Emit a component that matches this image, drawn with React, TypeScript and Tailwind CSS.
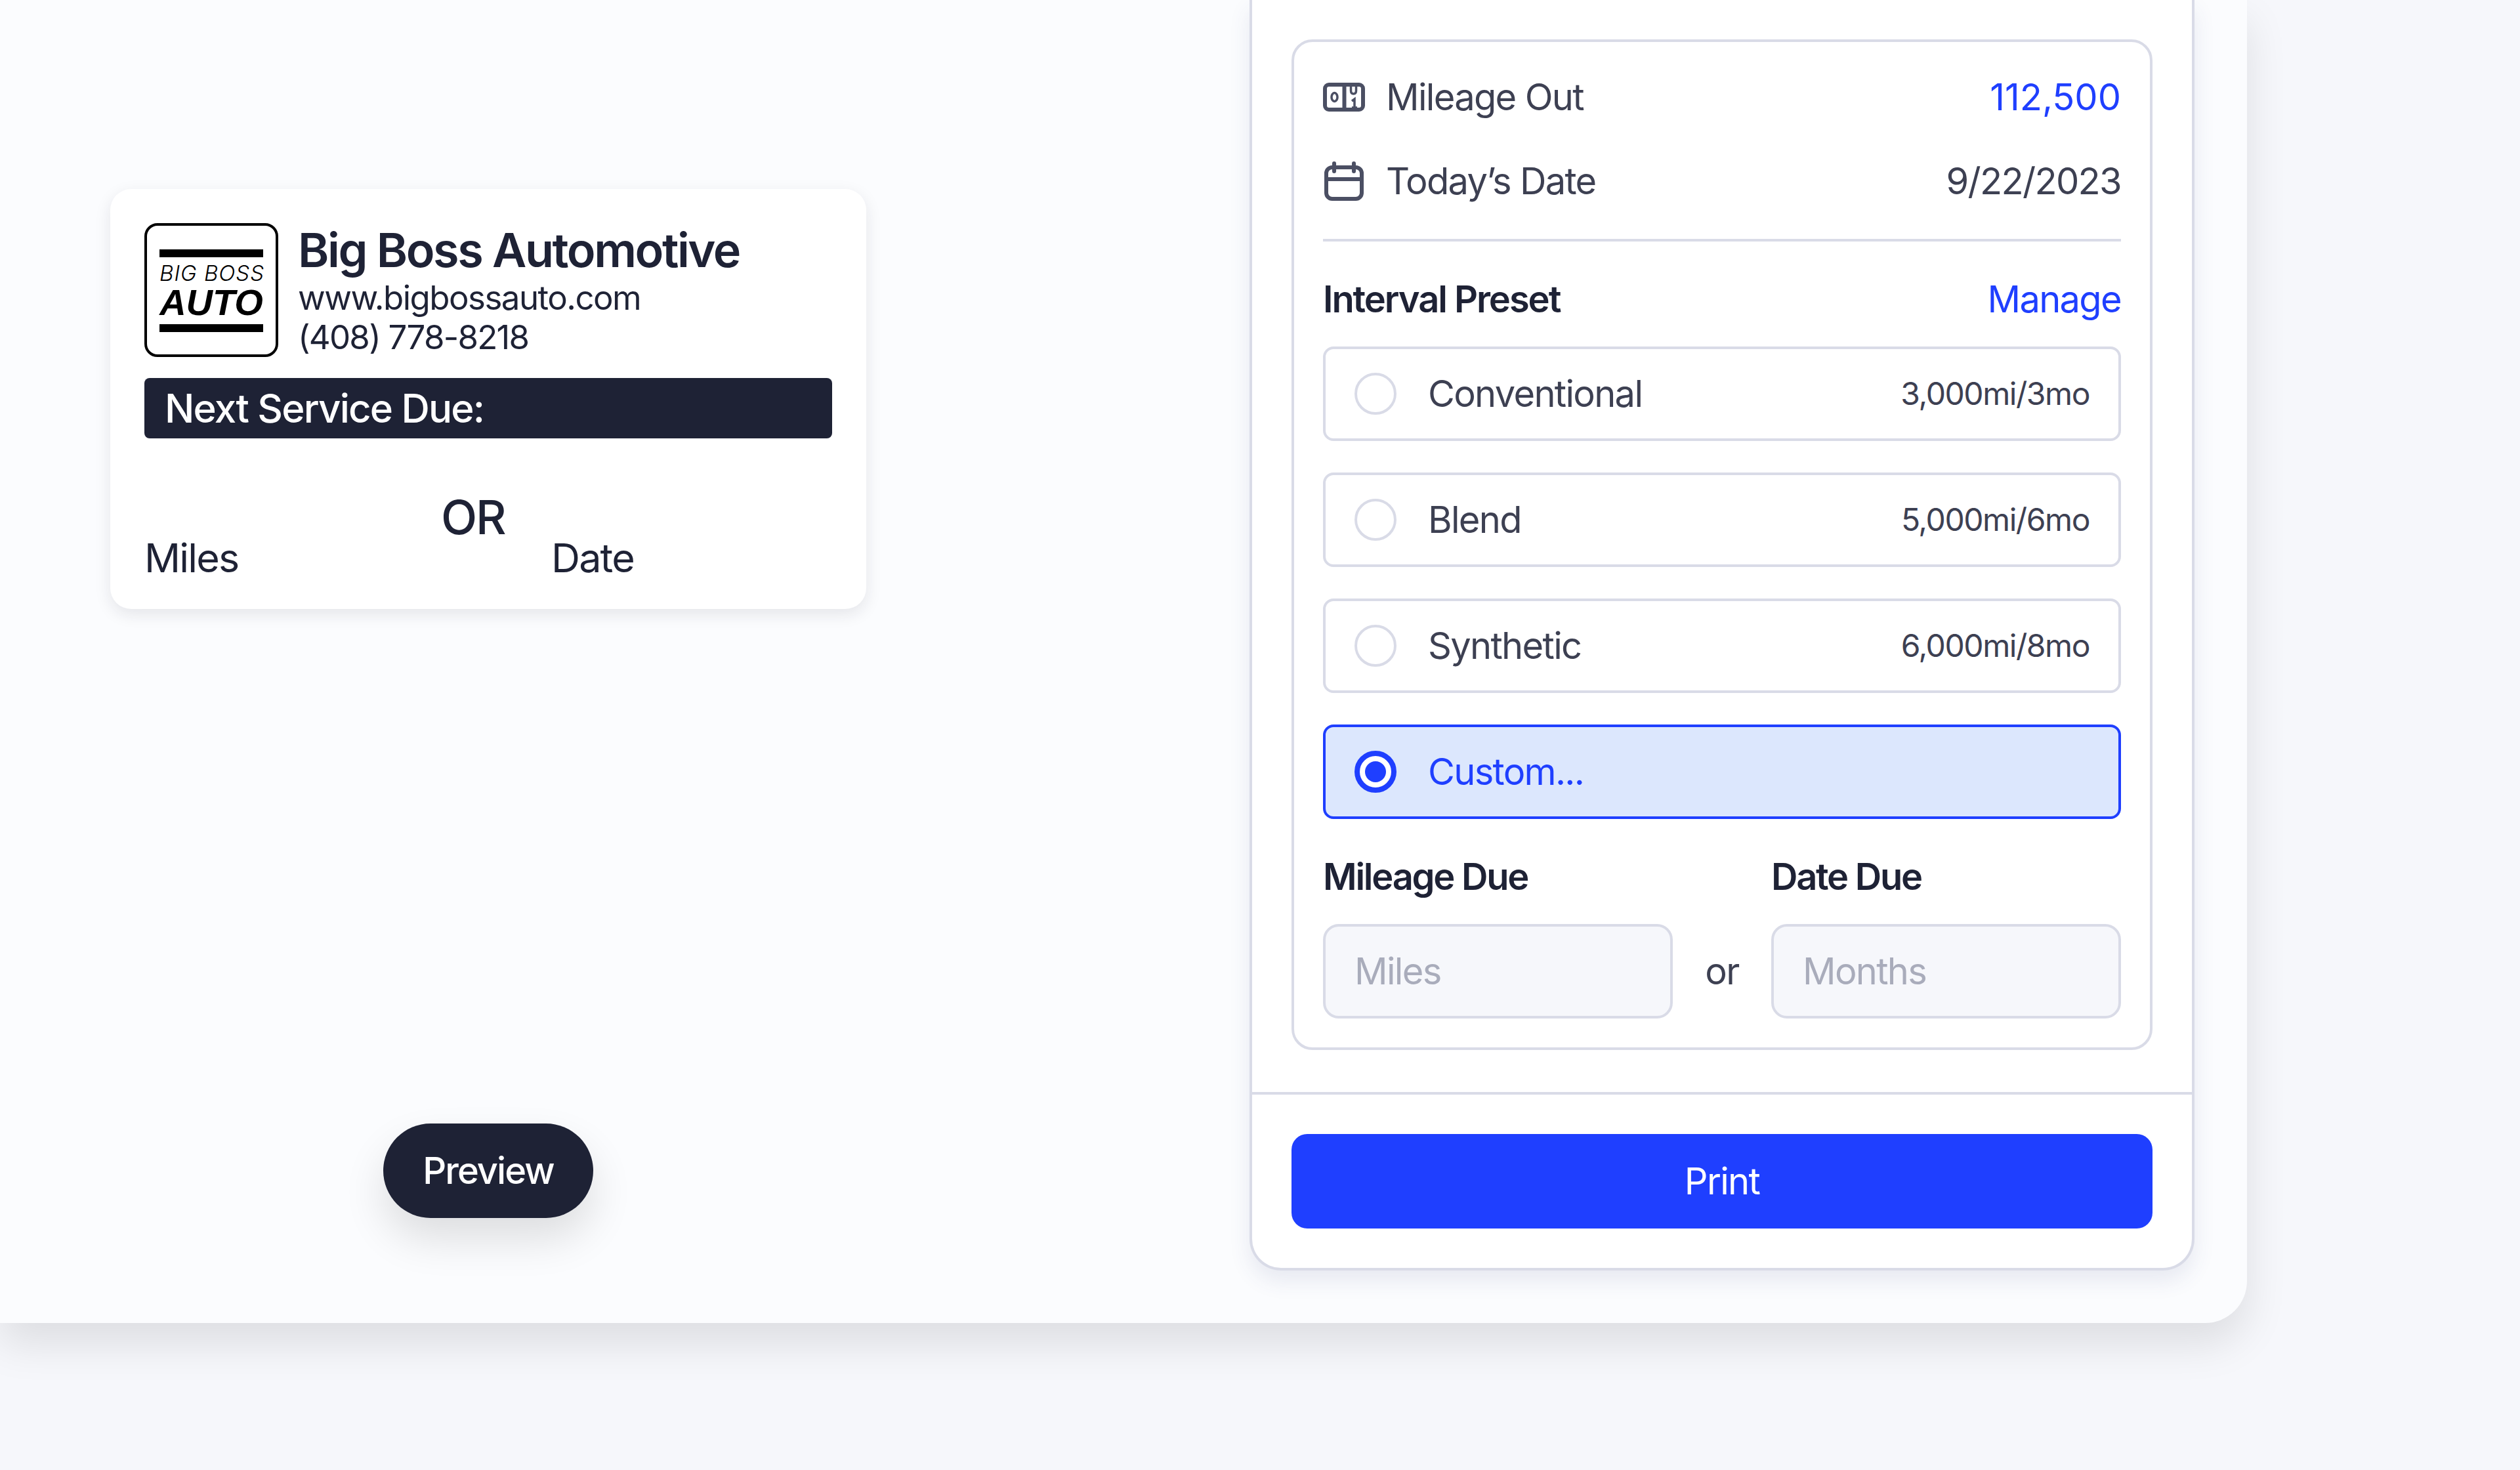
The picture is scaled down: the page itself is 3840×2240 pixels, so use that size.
import { type ReactNode } from "react";

const presets = [
  { name: "Conventional", interval: "3,000mi/3mo" },
  { name: "Blend", interval: "5,000mi/6mo" },
  { name: "Synthetic", interval: "6,000mi/8mo" },
];

function OdometerIcon() {
  return (
    <svg width="64" height="44" viewBox="0 0 64 44" fill="none" className="shrink-0">
      <rect x="3" y="3" width="58" height="38" rx="6" stroke="#4b4f63" strokeWidth="6" />
      <path d="M32.5 3V41" stroke="#4b4f63" strokeWidth="6" />
      {/* counter digits */}
      <ellipse cx="17.5" cy="22" rx="4.5" ry="6.5" stroke="#4b4f63" strokeWidth="3.5" />
      <path d="M42.5 5V12Q42.5 17 46.5 17Q50.5 17 50.5 12V5" stroke="#4b4f63" strokeWidth="3.5" />
      <path d="M44 28L48 25V39M44 38H52" stroke="#4b4f63" strokeWidth="3.5" />
    </svg>
  );
}

function CalendarIcon() {
  return (
    <svg width="64" height="60" viewBox="0 0 64 60" fill="none" className="shrink-0">
      <rect x="5" y="9" width="54" height="48" rx="9" stroke="#4b4f63" strokeWidth="6" />
      <path d="M5 27H59" stroke="#4b4f63" strokeWidth="6" />
      <path d="M17 3V15M47 3V15" stroke="#4b4f63" strokeWidth="6" strokeLinecap="round" />
    </svg>
  );
}

function Logo() {
  return (
    <div className="flex h-[204px] w-[204px] shrink-0 flex-col rounded-[20px] border-4 border-black bg-white px-[19px] pt-[36px] font-['Liberation_Sans',sans-serif] tracking-normal text-black italic">
      <div className="h-[12px] bg-black" />
      <div className="mt-[6px] h-[36px] text-center font-[Inter,sans-serif] text-[33px] leading-[36px] font-light tracking-[1px] whitespace-nowrap">
        BIG BOSS
      </div>
      <div className="mt-[2px] h-[50px] text-center text-[56px] leading-[50px] font-bold whitespace-nowrap">
        AUTO
      </div>
      <div className="mt-[8px] h-[12px] bg-black" />
    </div>
  );
}

function Row({ icon, label, children }: { icon: ReactNode; label: string; children: ReactNode }) {
  return (
    <div className="flex h-[80px] items-center justify-between">
      <div className="flex items-center gap-[32px] text-[#3d4052]">
        {icon}
        <span>{label}</span>
      </div>
      {children}
    </div>
  );
}

export default function App() {
  return (
    <div className="h-[2240px] w-full overflow-hidden bg-[#f6f7fb] font-[Inter,sans-serif] text-[56px] leading-[80px] tracking-[-0.03em] text-[#1e2235]">
      <div className="flex h-[2016px] w-[3424px] justify-between rounded-br-[64px] bg-[#fbfcfe] pr-[80px] pl-[168px] shadow-[0_32px_64px_rgba(0,0,0,0.1)]">
        {/* label preview */}
        <div className="flex w-[1152px] flex-col items-center pt-[288px]">
          <div className="h-[640px] w-full rounded-[32px] bg-white p-[52px] shadow-[0_8px_24px_rgba(30,34,53,0.1)]">
            <div className="flex gap-[30px]">
              <Logo />
              <div className="pt-[2px]">
                <div className="text-[72px] leading-[78px] font-semibold tracking-[-0.034em]">Big Boss Automotive</div>
                <div className="mt-[4px] text-[51px] leading-[60px] tracking-[-0.03em]">www.bigbossauto.com</div>
                <div className="text-[51px] leading-[60px] tracking-[-0.035em]">(408) 778-8218</div>
              </div>
            </div>
            <div className="mt-[32px] h-[92px] rounded-[8px] bg-[#1e2235] pl-[31px] text-[60px] leading-[92px] font-medium tracking-[-0.03em] text-white">
              Next Service Due:
            </div>
            <div className="mt-[84px] flex items-end text-[61px] leading-[72px] tracking-[-0.03em]">
              <div className="w-[452px]">Miles</div>
              <div className="mb-[62px] w-[168px] text-[72px] font-medium tracking-[-0.03em]">OR</div>
              <div>Date</div>
            </div>
          </div>
          <button className="mt-[784px] h-[144px] w-[320px] rounded-full bg-[#1e2235] text-[56px] font-medium tracking-[-0.035em] text-white shadow-[0_32px_64px_rgba(0,0,0,0.12)]">
            Preview
          </button>
        </div>

        {/* print form */}
        <div className="h-[1936px] w-[1440px] rounded-b-[48px] border-4 border-t-0 border-[#d9dbe7] bg-white shadow-[0_16px_32px_rgba(60,70,130,0.1)]">
          <div className="px-[60px] pt-[60px]">
            <div className="h-[1540px] rounded-[32px] border-4 border-[#d9dbe7] p-[44px]">
              <Row icon={<OdometerIcon />} label="Mileage Out">
                <span className="tracking-normal text-[#1f3fff]">112,500</span>
              </Row>
              <div className="mt-[48px]">
                <Row icon={<CalendarIcon />} label="Today’s Date">
                  <span className="text-[#3d4052]">9/22/2023</span>
                </Row>
              </div>
              <div className="mt-[48px] h-[4px] bg-[#d9dbe7]" />
              <div className="mt-[48px] flex h-[80px] items-center justify-between">
                <span className="font-semibold tracking-[-0.037em]">Interval Preset</span>
                <span className="text-[#1f3fff]">Manage</span>
              </div>
              <div className="mt-[32px] flex flex-col gap-[48px]">
                {presets.map((preset) => (
                  <div
                    key={preset.name}
                    className="flex h-[144px] items-center gap-[48px] rounded-[16px] border-4 border-[#d9dbe7] pr-[44px] pl-[44px] text-[#3d4052]"
                  >
                    <div className="h-[64px] w-[64px] rounded-full border-4 border-[#d9dbe7]" />
                    <span className="flex-1">{preset.name}</span>
                    <span className="text-[48px] tracking-[-0.03em]">{preset.interval}</span>
                  </div>
                ))}
                <div className="flex h-[144px] items-center gap-[48px] rounded-[16px] border-4 border-[#1f3fff] bg-[#dce7fd] pl-[44px] text-[#1f3fff]">
                  <div className="flex h-[64px] w-[64px] items-center justify-center rounded-full border-[8px] border-[#1f3fff] bg-white">
                    <div className="h-[32px] w-[32px] rounded-full bg-[#1f3fff]" />
                  </div>
                  <span>Custom...</span>
                </div>
              </div>
              <div className="mt-[48px] flex tracking-[-0.04em]">
                <div className="w-[683px] font-semibold">Mileage Due</div>
                <div className="font-semibold">Date Due</div>
              </div>
              <div className="mt-[32px] flex items-center">
                <input
                  placeholder="Miles"
                  className="h-[144px] w-[533px] rounded-[24px] border-4 border-[#d9dbe7] bg-[#f6f7fb] px-[44px] placeholder:text-[#a9acbb]"
                />
                <span className="flex-1 text-center text-[#3d4052]">or</span>
                <input
                  placeholder="Months"
                  className="h-[144px] w-[533px] rounded-[24px] border-4 border-[#d9dbe7] bg-[#f6f7fb] px-[44px] placeholder:text-[#a9acbb]"
                />
              </div>
            </div>
          </div>
          <div className="mt-[64px] h-[4px] bg-[#d9dbe7]" />
          <div className="p-[60px]">
            <button className="h-[144px] w-full rounded-[24px] bg-[#1f3fff] text-[56px] text-white">
              Print
            </button>
          </div>
        </div>
      </div>
    </div>
  );
}
